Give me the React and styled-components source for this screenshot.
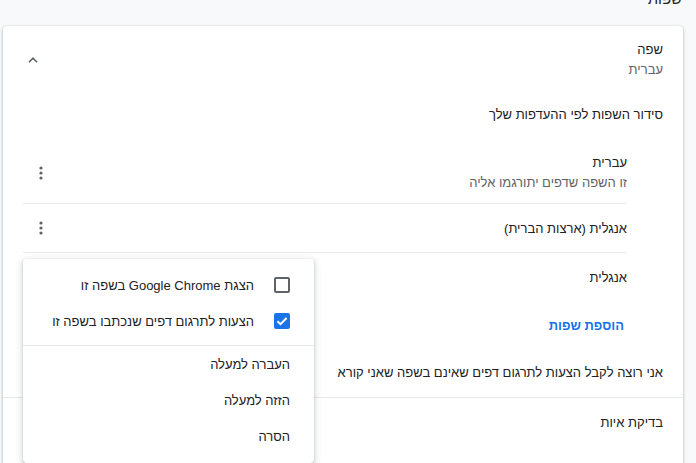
import React from "react";
import styled, { createGlobalStyle } from "styled-components";

const Global = createGlobalStyle`
  html, body { margin: 0; padding: 0; overflow: hidden; background: #f8f9fa; }
  body { font-family: "Liberation Sans", Arial, sans-serif; }
  * { box-sizing: border-box; }
`;

const Page = styled.div`
  position: relative;
  direction: rtl;
  width: 696px;
  height: 463px;
  padding-right: 13px;
  padding-left: 3px;
  overflow: hidden;
  font-size: 13px;
  color: #202124;
`;

const SectionTitle = styled.div`
  margin-top: -11px;
  height: 20px;
  line-height: 20px;
  padding-right: 1px;
  font-size: 15px;
  color: #202124;
`;

const Card = styled.div`
  margin-top: 17px;
  background: #fff;
  border-radius: 4px;
  box-shadow: 0 1px 2px rgba(60, 64, 67, 0.3), 0 1px 3px 1px rgba(60, 64, 67, 0.15);
  min-height: 500px;
`;

const HeaderRow = styled.div`
  display: flex;
  align-items: center;
  justify-content: space-between;
  height: 64px;
  padding: 4px 20px 0 12px;
`;

const TextBlock = styled.div`
  display: flex;
  flex-direction: column;
  line-height: 20px;
`;

const Primary = styled.div`
  color: #202124;
  font-size: 13px;
`;

const Secondary = styled.div`
  color: #5f6368;
  font-size: 13px;
`;

const IconBtn = styled.div`
  width: 36px;
  height: 36px;
  display: flex;
  align-items: center;
  justify-content: center;
  color: #5f6368;
`;

const SubHeader = styled.div`
  padding: 15px 20px 0 20px;
  line-height: 20px;
  height: 35px;
`;

const SubList = styled.div`
  margin: 12px 56px 0 20px;
`;

const ListRow = styled.div`
  display: flex;
  align-items: center;
  justify-content: space-between;
  height: ${(p) => p.$h || 48}px;
  padding-top: ${(p) => p.$pt || 0}px;
  border-top: ${(p) => (p.$divider ? "1px solid #e8eaed" : "none")};
`;

const AddLink = styled.div`
  color: #1a73e8;
  font-weight: bold;
  font-size: 13px;
  line-height: 20px;
  padding-top: 15px;
  height: 47px;
  margin-right: 59px;
`;

const FullRow = styled.div`
  display: flex;
  align-items: center;
  height: ${(p) => p.$h || 48}px;
  padding: 0 20px;
  border-top: ${(p) => (p.$divider ? "1px solid #e8eaed" : "none")};
`;

const Menu = styled.div`
  position: absolute;
  left: 23px;
  top: 259px;
  width: 291px;
  height: 204px;
  background: #fff;
  border-radius: 4px;
  box-shadow: 0 2px 6px 2px rgba(60, 64, 67, 0.15), 0 1px 2px 0 rgba(60, 64, 67, 0.3);
  padding: 8px 0;
  direction: rtl;
`;

const MenuItem = styled.div`
  display: flex;
  align-items: center;
  gap: 20px;
  height: 36px;
  padding: 0 24px;
  color: #202124;
  font-size: 13px;
`;

const MenuDivider = styled.div`
  height: 1px;
  background: #e8eaed;
  margin: 6px 0 0;
`;

const Box = styled.div`
  width: 16px;
  height: 16px;
  border-radius: 2px;
  flex: none;
  display: flex;
  align-items: center;
  justify-content: center;
  border: ${(p) => (p.$checked ? "none" : "2px solid #5f6368")};
  background: ${(p) => (p.$checked ? "#1a73e8" : "transparent")};
`;

const Chevron = () => (
  <svg width="10" height="6" viewBox="0 0 10 6">
    <path d="M1 5.2 L5 1.2 L9 5.2" fill="none" stroke="#5f6368" strokeWidth="1.6" />
  </svg>
);

const Dots = () => (
  <svg width="4" height="14" viewBox="0 0 4 14">
    <circle cx="2" cy="2" r="1.6" fill="#5f6368" />
    <circle cx="2" cy="7" r="1.6" fill="#5f6368" />
    <circle cx="2" cy="12" r="1.6" fill="#5f6368" />
  </svg>
);

const Check = () => (
  <svg width="16" height="16" viewBox="0 0 16 16">
    <path d="M3.4 8.3 L6.5 11.2 L12.6 5" fill="none" stroke="#fff" strokeWidth="2" />
  </svg>
);

export default function App() {
  return (
    <>
      <Global />
      <Page>
        <SectionTitle>שפות</SectionTitle>
        <Card>
          <HeaderRow>
            <TextBlock>
              <Primary>שפה</Primary>
              <Secondary>עברית</Secondary>
            </TextBlock>
            <IconBtn>
              <Chevron />
            </IconBtn>
          </HeaderRow>
          <SubHeader>סידור השפות לפי ההעדפות שלך</SubHeader>
          <SubList>
            <ListRow $h={66} $pt={6}>
              <TextBlock>
                <Primary>עברית</Primary>
                <Secondary>זו השפה שדפים יתורגמו אליה</Secondary>
              </TextBlock>
              <IconBtn>
                <Dots />
              </IconBtn>
            </ListRow>
            <ListRow $divider $h={49}>
              <Primary>אנגלית (ארצות הברית)</Primary>
              <IconBtn>
                <Dots />
              </IconBtn>
            </ListRow>
            <ListRow $divider $h={49}>
              <Primary>אנגלית</Primary>
              <IconBtn>
                <Dots />
              </IconBtn>
            </ListRow>
          </SubList>
          <AddLink>הוספת שפות</AddLink>
          <FullRow $h={49}>
            <Primary>אני רוצה לקבל הצעות לתרגום דפים שאינם בשפה שאני קורא</Primary>
          </FullRow>
          <FullRow $divider $h={49}>
            <Primary>בדיקת איות</Primary>
          </FullRow>
        </Card>
        <Menu>
          <MenuItem>
            <Box />
            <span>הצגת Google Chrome בשפה זו</span>
          </MenuItem>
          <MenuItem>
            <Box $checked>
              <Check />
            </Box>
            <span>הצעות לתרגום דפים שנכתבו בשפה זו</span>
          </MenuItem>
          <MenuDivider />
          <MenuItem>העברה למעלה</MenuItem>
          <MenuItem>הזזה למעלה</MenuItem>
          <MenuItem>הסרה</MenuItem>
        </Menu>
      </Page>
    </>
  );
}
